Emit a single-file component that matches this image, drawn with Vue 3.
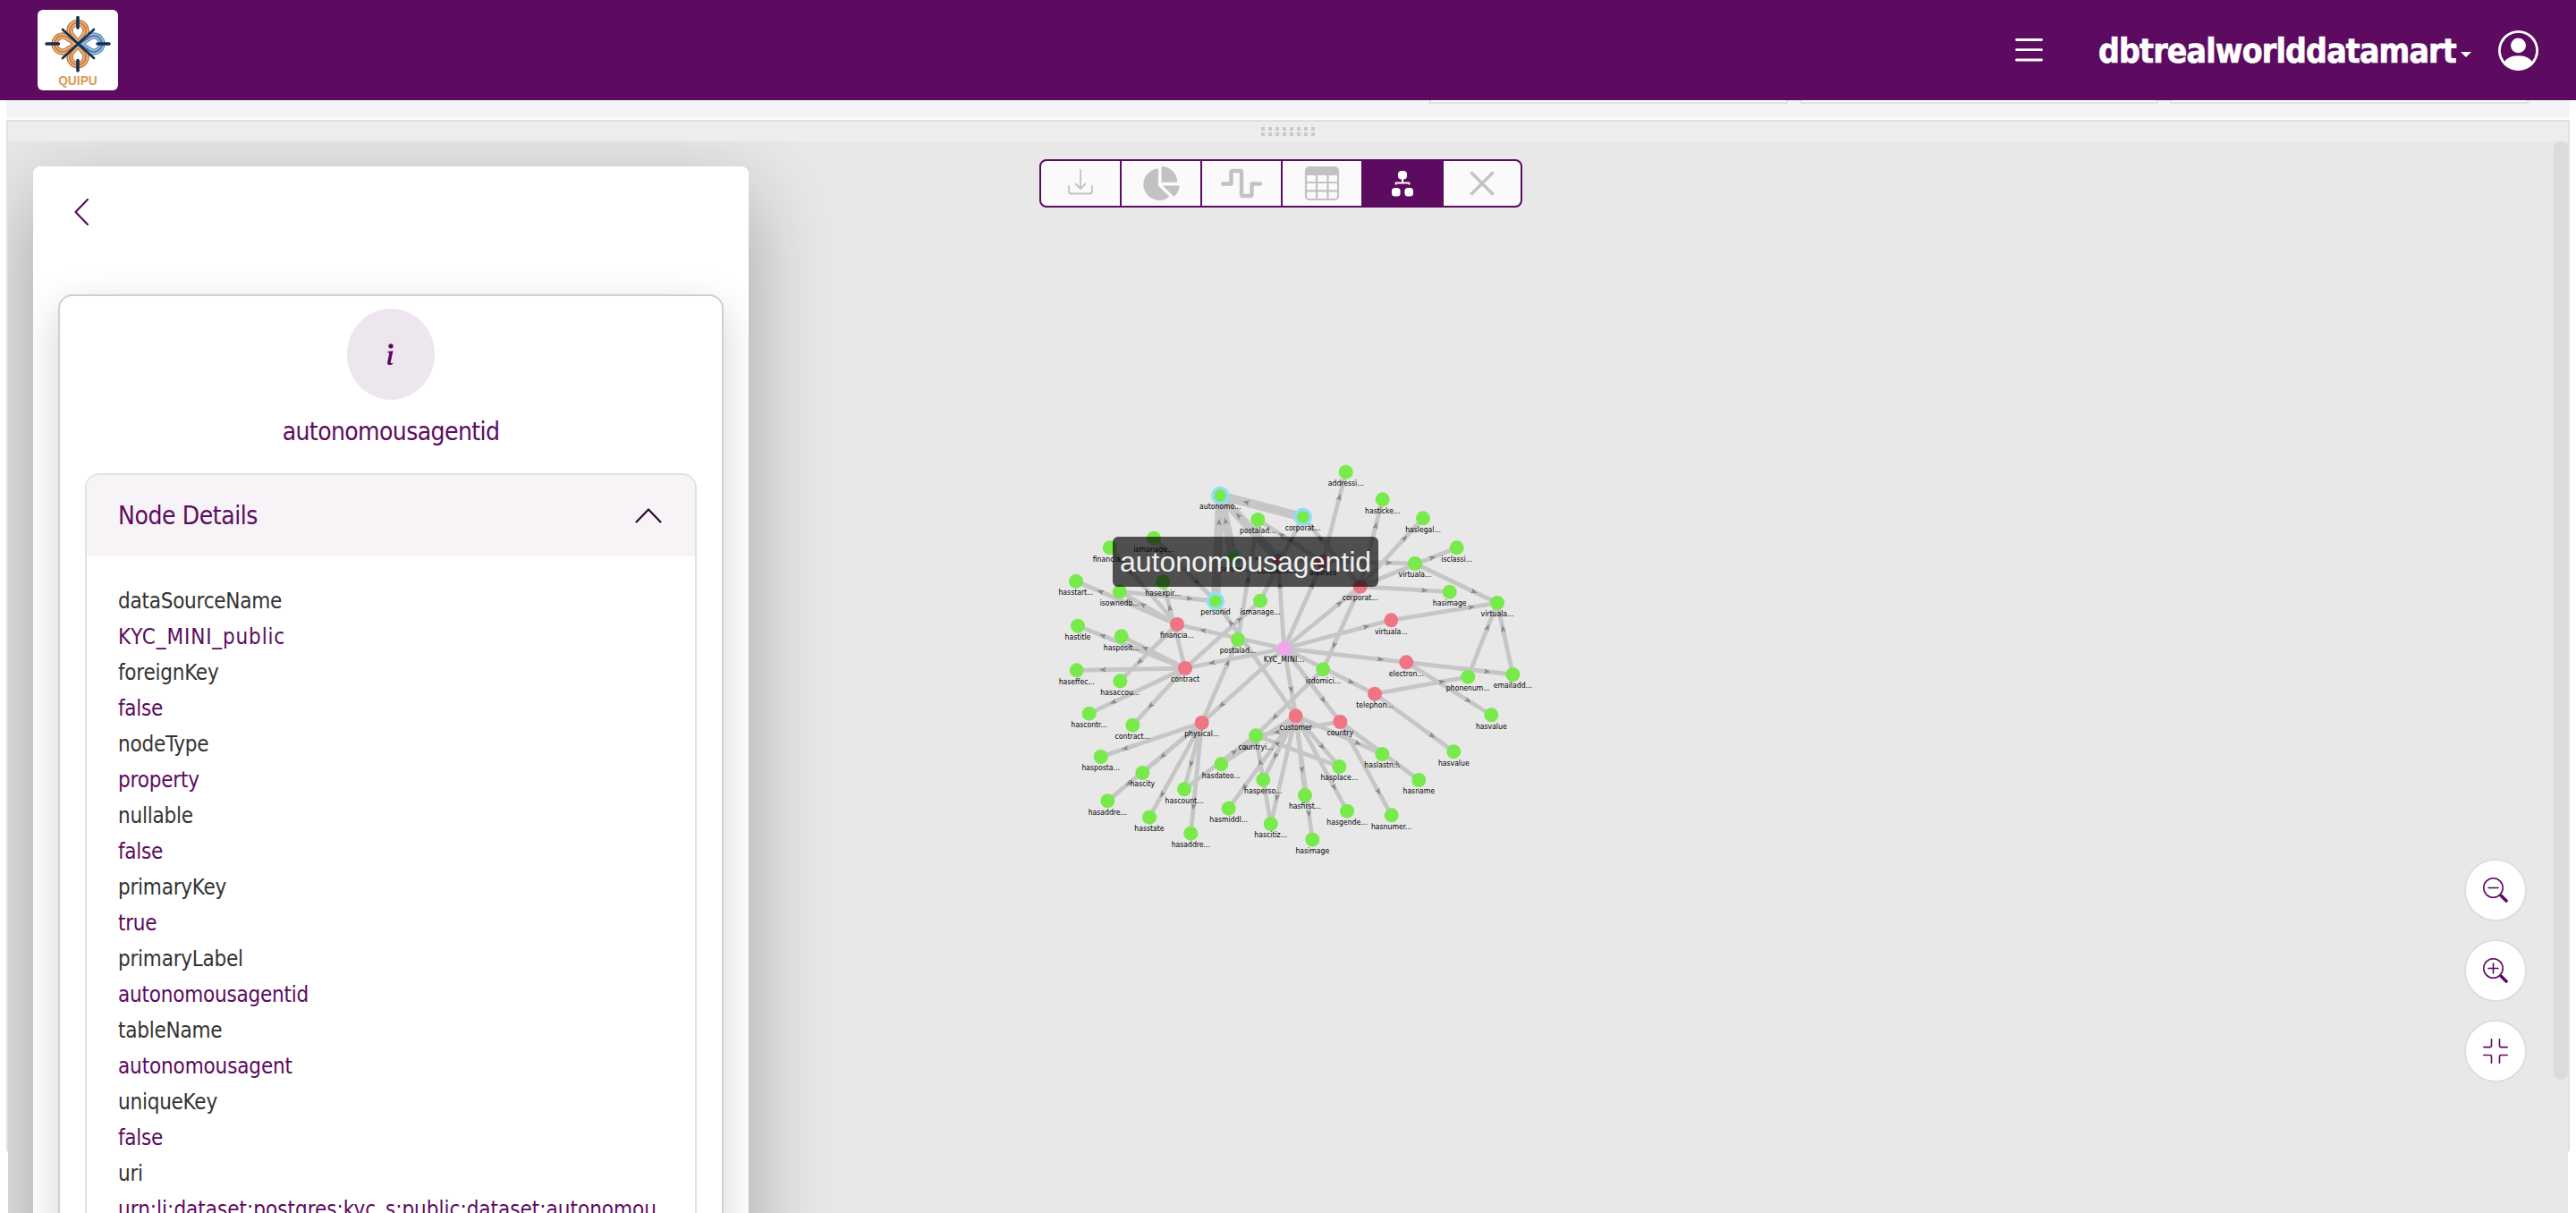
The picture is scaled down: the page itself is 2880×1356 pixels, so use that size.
<script setup>
// property name, value, letter spacing of the value
const rows = [
  ['dataSourceName', 'KYC_MINI_public', 0.85],
  ['foreignKey', 'false', -0.25],
  ['nodeType', 'property', -0.2],
  ['nullable', 'false', -0.25],
  ['primaryKey', 'true', -0.25],
  ['primaryLabel', 'autonomousagentid', -0.22],
  ['tableName', 'autonomousagent', -0.14],
  ['uniqueKey', 'false', -0.25],
  ['uri', 'urn:li:dataset:postgres:kyc_s:public:dataset:autonomou', 0],
]

const nodes = {
  kyc: [1435.7, 725, 'KYC_MINI...', 'root'],
  fin: [1316, 698, 'financia...', 'table'],
  con: [1325, 747, 'contract', 'table'],
  phy: [1343.7, 808, 'physical...', 'table'],
  cus: [1448.7, 800.3, 'customer', 'table'],
  cou: [1498.3, 807, 'country', 'table'],
  tel: [1537, 775.7, 'telephon...', 'table'],
  ele: [1572.3, 740.3, 'electron...', 'table'],
  vir: [1555.3, 693.3, 'virtuala...', 'table'],
  cor: [1520.7, 655.7, 'corporat...', 'table'],
  adr: [1479, 628, 'address', 'table'],
  aut: [1429, 625.7, 'autonomo...', 'table ring'],
  autId: [1364.3, 554, 'autonomo...', 'prop ring'],
  corId: [1456.7, 578, 'corporat...', 'prop ring'],
  isind: [1378.7, 623.3, 'isindex...', 'prop ring'],
  person: [1359, 672, 'personid', 'prop ring'],
  post1: [1406.3, 581, 'postalad...', 'prop'],
  man1: [1290, 601.7, 'ismanage...', 'prop'],
  finId: [1240.7, 612.3, 'financia...', 'prop'],
  start: [1203, 649.7, 'hasstart...', 'prop'],
  owned: [1251.7, 661.3, 'isownedb...', 'prop'],
  expir: [1300.3, 650.5, 'hasexpir...', 'prop'],
  man2: [1409, 671.7, 'ismanage...', 'prop'],
  title: [1205, 699.7, 'hastitle', 'prop'],
  posit: [1253.7, 711.3, 'hasposit...', 'prop'],
  post2: [1384, 715, 'postalad...', 'prop'],
  addressi: [1504.7, 527.7, 'addressi...', 'prop'],
  ticke: [1545.7, 558.3, 'hasticke...', 'prop'],
  legal: [1591, 579.3, 'haslegal...', 'prop'],
  classi: [1628.7, 612.3, 'isclassi...', 'prop'],
  vir1: [1582, 630, 'virtuala...', 'prop'],
  image1: [1620.7, 661.7, 'hasimage', 'prop'],
  vir2: [1674, 674, 'virtuala...', 'prop'],
  domici: [1479.3, 748.3, 'isdomici...', 'prop'],
  phone: [1641.3, 756.7, 'phonenum...', 'prop'],
  email: [1691.3, 754, 'emailadd...', 'prop'],
  value1: [1667.3, 799.3, 'hasvalue', 'prop'],
  value2: [1625.3, 840.3, 'hasvalue', 'prop'],
  lastn: [1545.3, 843, 'haslastn...', 'prop'],
  place: [1497.3, 857, 'hasplace...', 'prop'],
  name: [1586.3, 872, 'hasname', 'prop'],
  first: [1459, 889, 'hasfirst...', 'prop'],
  gende: [1506, 906.7, 'hasgende...', 'prop'],
  numer: [1555.7, 911.3, 'hasnumer...', 'prop'],
  image2: [1467.3, 938.7, 'hasimage', 'prop'],
  effec: [1203.7, 749.3, 'haseffec...', 'prop'],
  accou: [1252.3, 761.3, 'hasaccou...', 'prop'],
  contr: [1217.7, 797.7, 'hascontr...', 'prop'],
  conId: [1266.3, 810.7, 'contract...', 'prop'],
  countryi: [1404, 822.3, 'countryi...', 'prop'],
  posta: [1230.7, 846, 'hasposta...', 'prop'],
  dateo: [1365.3, 854.3, 'hasdateo...', 'prop'],
  city: [1277.3, 864, 'hascity', 'prop'],
  count: [1324, 882.3, 'hascount...', 'prop'],
  perso: [1412.3, 871.7, 'hasperso...', 'prop'],
  middl: [1373.7, 903.7, 'hasmiddl...', 'prop'],
  addre1: [1238.3, 895.3, 'hasaddre...', 'prop'],
  state: [1285, 913.7, 'hasstate', 'prop'],
  addre2: [1331.3, 931.7, 'hasaddre...', 'prop'],
  citiz: [1420.7, 921, 'hascitiz...', 'prop'],
}

// source, target, arrow position along the edge, highlighted
const edges = [
  ['kyc', 'fin', 0.76], ['kyc', 'con', 0.73], ['kyc', 'phy', 0.76], ['kyc', 'cus', 0.61],
  ['kyc', 'cou', 0.7], ['kyc', 'tel', 0.74], ['kyc', 'ele', 0.79], ['kyc', 'vir', 0.77],
  ['kyc', 'cor', 0.73], ['kyc', 'adr', 0.73], ['kyc', 'aut', 0.71],
  ['aut', 'autId', 0.69, true], ['isind', 'autId', 0.59, true],
  ['person', 'autId', 0.75, true], ['corId', 'autId', 0.69, true],
  ['aut', 'vir1', 0.81], ['aut', 'isind', 0.46], ['man2', 'corId', 0.73],
  ['cor', 'corId', 0.7], ['adr', 'addressi', 0.72], ['adr', 'post1', 0.64],
  ['post2', 'post1', 0.5], ['con', 'man2', 0.73], ['phy', 'post2', 0.72],
  ['cus', 'person', 0.81], ['man1', 'person', 0.7], ['owned', 'person', 0.73],
  ['cor', 'ticke', 0.7], ['cor', 'legal', 0.71], ['cor', 'classi', 0.75],
  ['vir1', 'vir2', 0.72], ['cor', 'image1', 0.72], ['vir', 'vir2', 0.76],
  ['cor', 'domici', 0.71], ['phone', 'vir2', 0.67], ['email', 'vir2', 0.64],
  ['ele', 'email', 0.76], ['ele', 'value1', 0.73], ['tel', 'phone', 0.72],
  ['tel', 'value2', 0.73], ['cou', 'name', 0.73], ['cou', 'numer', 0.75],
  ['cus', 'lastn', 0.72], ['cou', 'countryi', 0.75], ['place', 'countryi', 0.75],
  ['cus', 'place', 0.61], ['cus', 'gende', 0.75], ['cus', 'first', 0.68],
  ['cus', 'image2', 0.79], ['cus', 'perso', 0.63], ['cus', 'citiz', 0.76],
  ['citiz', 'countryi', 0.7], ['cus', 'middl', 0.77], ['domici', 'countryi', 0.72],
  ['count', 'countryi', 0.7], ['cus', 'dateo', 0.68], ['phy', 'posta', 0.76],
  ['phy', 'city', 0.66], ['phy', 'addre1', 0.78], ['phy', 'state', 0.76],
  ['phy', 'count', 0.62], ['phy', 'addre2', 0.76], ['con', 'effec', 0.76],
  ['con', 'contr', 0.75], ['con', 'conId', 0.66], ['con', 'posit', 0.63],
  ['con', 'title', 0.77], ['con', 'expir', 0.7], ['fin', 'start', 0.76],
  ['fin', 'owned', 0.6], ['fin', 'finId', 0.7], ['fin', 'accou', 0.66],
].map(([s, t, p, wide]) => {
  const [x1, y1] = nodes[s]
  const [x2, y2] = nodes[t]
  const angle = (Math.atan2(y2 - y1, x2 - x1) * 180) / Math.PI
  return {
    x1, y1, x2, y2, wide,
    arrow: `translate(${x1 + (x2 - x1) * p} ${y1 + (y2 - y1) * p}) rotate(${angle})`,
  }
})
</script>

<template>
  <div class="app">
    <header class="topbar">
      <svg class="logo" viewBox="0 0 90 90">
        <rect width="90" height="90" rx="6" fill="#fff" />
        <g fill="none" stroke-linejoin="round">
          <g v-for="s in [[7.4, '#c07336'], [4.6, '#f6d3ac'], [2.6, '#d08242']]" :key="s[0]" :stroke-width="s[0]" :stroke="s[1]">
            <path d="M45 38 38 29A9 9 0 1 1 52 29Z" />
            <path d="M45 38 33 45.500A9 9 0 1 1 33 30.500Z" />
            <path d="M45 38 52 47A9 9 0 1 1 38 47Z" />
          </g>
          <g v-for="s in [[7.4, '#5b86b8'], [4.6, '#c3d8ee'], [2.6, '#5580b4']]" :key="s[1]" :stroke-width="s[0]" :stroke="s[1]">
            <path d="M47 38 58 30.500A9 9 0 1 1 58 45.500Z" />
          </g>
          <g stroke="#13304f" stroke-linecap="round">
            <path d="M28 22 63 54M63 22 28 54" stroke-width="2.600" />
            <path d="M45 8.500V20M45 56.500V68M10 38H23.500M67 38H80" stroke-width="3.600" />
          </g>
        </g>
        <text x="45" y="84" text-anchor="middle" class="logo-text">QUIPU</text>
      </svg>
      <svg class="burger" viewBox="0 0 31 26"><path d="M1.500 1.500H29.500M1.500 12.700H29.500M1.500 24H29.500" stroke="#fff" stroke-width="2.800" stroke-linecap="round" /></svg>
      <div class="project"><span>dbtrealworlddatamart</span><i class="caret"></i></div>
      <svg class="avatar" viewBox="0 0 16 16" fill="#fff">
        <path d="M11 6a3 3 0 1 1-6 0 3 3 0 0 1 6 0" />
        <path fill-rule="evenodd" d="M0 8a8 8 0 1 1 16 0A8 8 0 0 1 0 8m8-7a7 7 0 0 0-5.468 11.370C3.242 11.226 4.805 10 8 10s4.757 1.225 5.468 2.370A7 7 0 0 0 8 1" />
      </svg>
    </header>

    <div class="strip"><i></i><i></i><i></i></div>

    <main class="pane">
      <div class="frame"></div>
      <div class="handle"><div class="grip"><i v-for="n in 16" :key="n"></i></div></div>
      <section class="canvas">
        <aside class="panel">
          <svg class="back" viewBox="0 0 16 30"><path d="M15 1 1.500 15 15 29" fill="none" stroke="#5c0b60" stroke-width="2.200" stroke-linecap="round" stroke-linejoin="round" /></svg>
          <div class="card">
            <div class="badge">
              <svg viewBox="0 0 16 16" fill="#5c0b60"><path d="m8.930 6.588-2.290.287-.082.380.450.083c.294.070.352.176.288.469l-.738 3.468c-.194.897.105 1.319.808 1.319.545 0 1.178-.252 1.465-.598l.088-.416c-.200.176-.492.246-.686.246-.275 0-.375-.193-.304-.533zM9 4.500a1 1 0 1 1-2 0 1 1 0 0 1 2 0" /></svg>
            </div>
            <div class="title">autonomousagentid</div>
            <div class="details">
              <div class="details-head">
                <span>Node Details</span>
                <svg viewBox="0 0 30 17"><path d="M1.500 15.500 15 1.500 28.500 15.500" fill="none" stroke="#2a0a2c" stroke-width="2.200" stroke-linecap="round" stroke-linejoin="round" /></svg>
              </div>
              <dl>
                <template v-for="r in rows" :key="r[0]">
                  <dt>{{ r[0] }}</dt>
                  <dd :style="{ letterSpacing: r[2] + 'px' }">{{ r[1] }}</dd>
                </template>
              </dl>
            </div>
          </div>
        </aside>
      </section>

      <svg class="graph" viewBox="1180 500 560 460">
        <line v-for="(e, i) in edges" :key="'e' + i" :x1="e.x1" :y1="e.y1" :x2="e.x2" :y2="e.y2" stroke="#c6c6c6" :stroke-width="e.wide ? 10 : 4.8" />
        <path v-for="(e, i) in edges" :key="'a' + i" d="M3.800 0-3.800-2.900-2.200 0-3.800 2.900Z" fill="#8a8a8a" :transform="e.arrow" />
        <g v-for="(n, k) in nodes" :key="k">
          <circle v-if="n[3].includes('ring')" :cx="n[0]" :cy="n[1]" r="10.200" fill="#92dcfb" />
          <circle :cx="n[0]" :cy="n[1]" :r="n[3].includes('ring') ? 6.8 : 8" :class="n[3]" />
        </g>
        <text v-for="(n, k) in nodes" :key="'t' + k" :x="n[0]" :y="n[1] + 15.4" :textLength="k === 'kyc' ? 45.7 : undefined">{{ n[2] }}</text>
      </svg>

      <div class="tooltip">autonomousagentid</div>

      <nav class="tools">
        <div class="tool"><svg width="28" height="26" viewBox="0 0 28 26" fill="none" stroke="#c2c2c2" stroke-width="1.800" stroke-linecap="round" stroke-linejoin="round"><path d="M1 16V21.500Q1 24.500 4 24.500H24Q27 24.500 27 21.500V16M14 -2V19M8.500 13.500 14 19 19.500 13.500" /></svg></div>
        <div class="tool"><svg width="41" height="38" viewBox="0 0 544 512" fill="#c2c2c2"><path d="M527.790 288H290.500l158.030 158.030c6.040 6.040 15.980 6.530 22.190.680 38.700-36.460 65.320-85.610 73.130-140.860 1.340-9.460-6.510-17.850-16.060-17.850zm-15.830-64.800C503.720 103.740 408.260 8.280 288.800.040 279.680-.590 272 7.100 272 16.240V240h223.770c9.140 0 16.820-7.680 16.190-16.800zM224 288V50.710c0-9.550-8.390-17.400-17.840-16.060C86.990 51.490-4.100 155.600.140 280.370 4.500 408.510 114.830 513.590 243.030 511.980c50.400-.630 96.970-16.870 135.260-44.030 7.900-5.600 8.420-17.230 1.570-24.080L224 288z" /></svg></div>
        <div class="tool"><svg width="48" height="34" viewBox="0 0 48 34" fill="none" stroke="#c2c2c2" stroke-width="4.400" stroke-linecap="round" stroke-linejoin="round"><path d="M3 17.500H12.500V4.500Q12.500 3 14 3H22.500Q24 3 24 4.500V29.500Q24 31 25.500 31H34Q35.500 31 35.500 29.500V17.500H45" /></svg></div>
        <div class="tool"><svg width="38" height="38" viewBox="0 0 38 38" fill="none" stroke="#c2c2c2"><rect x="1" y="1" width="36" height="36" rx="4" stroke-width="2.200" /><path d="M1 9.500V5Q1 1 5 1H33Q37 1 37 5V9.500Z" fill="#c2c2c2" /><path d="M13 9V37M25.500 9V37M1 18H37M1 27.300H37" stroke-width="2.200" /></svg></div>
        <div class="tool on"><svg width="24" height="30" viewBox="0 0 24 30" fill="#fff"><rect x="7" y="1" width="10" height="9.600" rx="4" /><rect x="0" y="20" width="9.600" height="9.600" rx="3.600" /><rect x="14.400" y="20" width="9.600" height="9.600" rx="3.600" /><path d="M12 10V14.500M4.600 16.500V14.500H19.400V16.500" fill="none" stroke="#fff" stroke-width="2" stroke-linejoin="round" /></svg></div>
        <div class="tool"><svg width="28" height="28" viewBox="0 0 28 28"><path d="M1.500 1.500 26.500 26.500M26.500 1.500 1.500 26.500" stroke="#c2c2c2" stroke-width="3.400" /></svg></div>
      </nav>

      <div class="zoom">
        <button><svg viewBox="0 0 28 28"><circle cx="11.500" cy="11.500" r="10.700" /><path d="M6 11.500H17" /><path d="M20.500 20.500 26 26" stroke-width="3.600" /></svg></button>
        <button><svg viewBox="0 0 28 28"><circle cx="11.500" cy="11.500" r="10.700" /><path d="M6 11.500H17M11.500 6V17" /><path d="M20.500 20.500 26 26" stroke-width="3.600" /></svg></button>
        <button><svg viewBox="0 0 28 28"><path d="M9.500.800V8Q9.500 9.600 8 9.600H.800M18.500.800V8Q18.500 9.600 20 9.600H27.200M9.500 27.200V20Q9.500 18.500 8 18.500H.800M18.500 27.200V20Q18.500 18.500 20 18.500H27.200" /></svg></button>
      </div>
      <div class="scrollbar"></div>
    </main>
  </div>
</template>

<style>
body { margin: 0; background: #fff; overflow: hidden; }
</style>

<style scoped>
* { box-sizing: border-box; }
.app {
  width: 2880px; height: 1356px; overflow: hidden; display: flex; flex-direction: column;
  font-family: "DejaVu Sans Condensed", "DejaVu Sans", sans-serif; font-stretch: condensed;
}
svg { display: block; flex: none; overflow: visible; }
.topbar { height: 112px; flex: none; background: #5c0b60; display: flex; align-items: center; padding: 0 42px; }
.logo { width: 90px; height: 90px; margin-right: auto; }
.logo-text { font: bold 13.800px "Liberation Sans", sans-serif; fill: #dd9757; }
.burger { width: 31px; height: 26px; margin-right: 62px; }
.project { color: #fff; font-weight: 700; font-size: 37px; line-height: 44px; display: flex; width: 417px; margin-right: 30px; align-items: center; }
.project span { white-space: nowrap; letter-spacing: -.8px; margin-top: 3px; -webkit-text-stroke: .7px #fff; }
.caret { border: 6px solid transparent; border-top-color: #fff; border-bottom: 0; margin: 10px 0 0 5px; }
.avatar { width: 45px; height: 45px; }
.strip { height: 20px; flex: none; margin: 0 7px; background: #f4f4f4; display: flex; justify-content: flex-end; gap: 13px; padding-right: 46px; }
.strip i { width: 401px; height: 4px; background: #fff; border: 2px solid #dee2e6; border-top: 0; }
.pane { position: relative; flex: 1; margin: 2px 9px 0; display: flex; flex-direction: column; }
.frame { position: absolute; left: -2px; right: -2px; top: 0; height: 1153px; border: 2px solid #dde1e6; border-bottom: 0; }
.handle { height: 24px; flex: none; border-top: 2px solid #dde1e6; background: #ededed; display: flex; justify-content: center; align-items: center; }
.grip { display: grid; grid-template-columns: repeat(8, 4px); gap: 2px 4px; }
.grip i { height: 4px; background: #cacaca; }
.canvas { flex: 1; min-height: 0; overflow: hidden; background: #e8e8e8; padding: 28px 0 0 28px; }
.panel {
  width: 800px; height: 1300px; background: #fff; border-radius: 8px; padding: 36px 28px 0 28px;
  box-shadow: 0 32px 96px rgba(0, 0, 0, .3); overflow: hidden;
}
.back { width: 16px; height: 30px; margin-left: 18px; }
.card {
  margin-top: 77px; height: 1200px; border: 2px solid #d0d0d0; border-radius: 16px; background: #fff;
  box-shadow: 0 16px 48px rgba(0, 0, 0, .175); padding: 14px 28px 0; display: flex; flex-direction: column; align-items: center;
}
.badge { width: 98px; height: 102px; border-radius: 50%; background: #ede6ee; display: flex; align-items: center; justify-content: center; }
.badge svg { width: 42px; height: 42px; }
.title { font-size: 28px; line-height: 36px; letter-spacing: -.6px; color: #5c0b60; margin-top: 18px; }
.details { align-self: stretch; margin-top: 28px; border: 2px solid #dee2e8; border-radius: 16px 16px 0 0; overflow: hidden; height: 1000px; }
.details-head { height: 91px; background: #f7f3f7; display: flex; align-items: center; justify-content: space-between; padding: 0 37px 0 35px; font-size: 28px; letter-spacing: -.42px; color: #5c0b60; }
.details-head span { padding-top: 1px; }
.details-head svg { width: 30px; height: 17px; }
dl { margin: 0; padding: 30px 35px; font-size: 24px; line-height: 40px; color: #333; white-space: nowrap; letter-spacing: -.24px; }
dd { margin: 0; color: #5c0b60; }
.graph { position: absolute; left: 1171px; top: 366px; width: 560px; height: 460px; }
.graph text { font-size: 8.600px; text-anchor: middle; fill: #000; }
.root { fill: #f3a5ee; }
.table { fill: #ef7585; }
.prop { fill: #79ea4b; }
.tooltip { position: absolute; left: 1235px; top: 466px; width: 297px; height: 56px; border-radius: 6px; background: rgba(0, 0, 0, .66); color: #f0f0f0; font: 32px/56px "Liberation Sans", sans-serif; text-align: center; white-space: nowrap; }
.tools { position: absolute; left: 1153px; top: 44px; width: 540px; height: 54px; display: flex; border: 2px solid #5c0b60; border-radius: 8px; background: #fafafa; overflow: hidden; }
.tool { width: 90px; border-right: 2px solid #5c0b60; display: flex; align-items: center; justify-content: center; }
.tool:last-child { flex: 1; border: 0; }
.tool.on { background: #5c0b60; }
.zoom { position: absolute; left: 2746px; top: 826px; display: flex; flex-direction: column; gap: 20px; }
.zoom button { width: 70px; height: 70px; padding: 0; border-radius: 50%; border: 2px solid #dedede; background: #fff; display: flex; align-items: center; justify-content: center; }
.zoom svg { width: 28px; height: 28px; fill: none; stroke: #5c0b60; stroke-width: 1.600; stroke-linecap: round; }
.scrollbar { position: absolute; right: 0; top: 24px; width: 16px; height: 1049px; border-radius: 8px; background: #dcdcdc; }
</style>
